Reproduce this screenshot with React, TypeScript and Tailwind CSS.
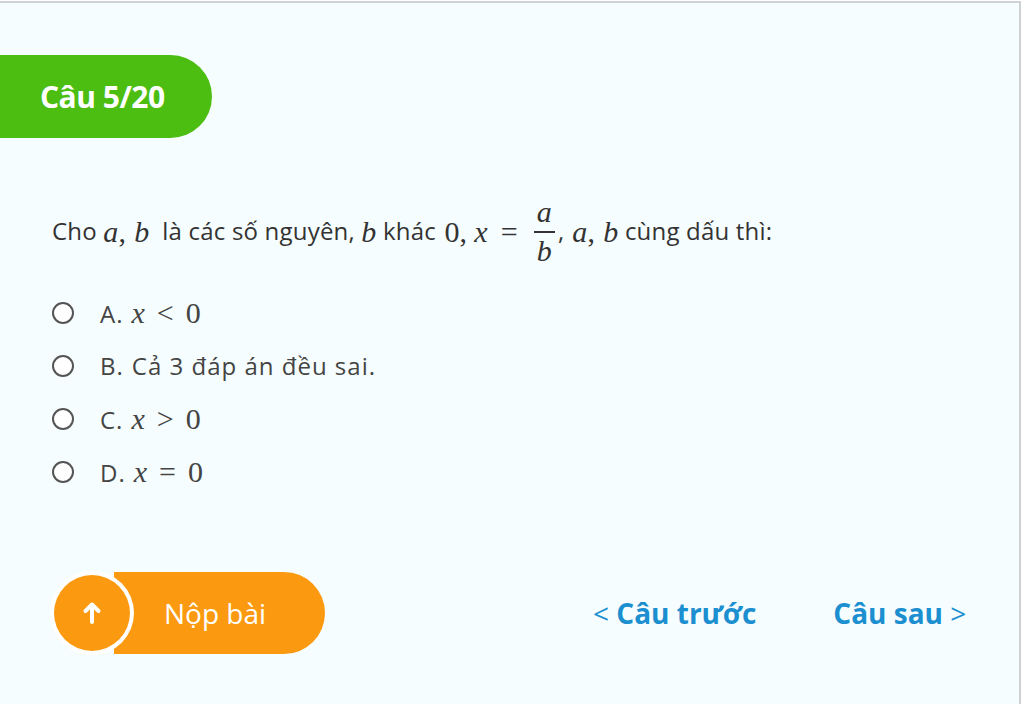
import React from "react";

const math = "font-['Liberation_Serif',serif] italic text-[30px]";
const num = "font-['Liberation_Serif',serif] not-italic text-[30px]";

function M({ children }: { children: React.ReactNode }) {
  return <span className={math}>{children}</span>;
}

function N({ children, className = "" }: { children: React.ReactNode; className?: string }) {
  return <span className={`${num} ${className}`}>{children}</span>;
}

function Rel({ x, op }: { x: string; op: string }) {
  return (
    <span className="inline-flex items-baseline">
      <M>{x}</M>
      <N className="mx-[11px]">{op}</N>
      <N>0</N>
    </span>
  );
}

function Option({ label, children }: { label: string; children: React.ReactNode }) {
  return (
    <div className="flex items-center h-[53px]">
      <span className="w-[22px] h-[22px] rounded-full border-2 border-[#555] bg-white shrink-0" />
      <span className="ml-[26px] text-[24px] tracking-[1px] text-[#444] flex items-baseline gap-[8px]">
        <span>{label}</span>
        {children}
      </span>
    </div>
  );
}

export default function App() {
  return (
    <div className="w-[1024px] h-[704px] bg-white pt-px font-['Open_Sans',sans-serif] overflow-hidden">
      <div className="w-[1021px] h-[703px] bg-[#f6fdfe] border-t-2 border-r-2 border-[#cfd2d4]">
        <div className="mt-[52px] w-[212px] h-[83px] bg-[#4cbe12] rounded-r-full flex items-center pl-[40px]">
          <span className="text-white font-bold text-[30px] tracking-[-0.5px]">Câu 5/20</span>
        </div>

        <div className="mt-[55px] ml-[52px] flex items-center h-[76px] text-[24px] tracking-[0.2px] text-[#333] whitespace-nowrap">
          <span>Cho&nbsp;</span>
          <M>a</M>
          <N className="mr-[8px]">,</N>
          <M>b</M>
          <span>&nbsp;&nbsp;là các số nguyên,&nbsp;</span>
          <M>b</M>
          <span>&nbsp;khác&nbsp;</span>
          <N className="ml-[2px]">0</N>
          <N className="mr-[7px]">,</N>
          <M>x</M>
          <N className="mx-[13px]">=</N>
          <span className="inline-flex flex-col items-center mx-[3px] leading-none">
            <span className={`${math} pb-[4px]`}>a</span>
            <span className="w-[21px] h-[2px] bg-[#333]" />
            <span className={`${math} pt-[3px]`}>b</span>
          </span>
          <span className="mr-[8px]">,</span>
          <M>a</M>
          <N className="mr-[8px]">,</N>
          <M>b</M>
          <span>&nbsp;cùng dấu thì:</span>
        </div>

        <div className="mt-[17px] ml-[52px] flex flex-col">
          <Option label="A.">
            <Rel x="x" op="<" />
          </Option>
          <Option label="B.">
            <span>Cả 3 đáp án đều sai.</span>
          </Option>
          <Option label="C.">
            <Rel x="x" op=">" />
          </Option>
          <Option label="D.">
            <Rel x="x" op="=" />
          </Option>
        </div>

        <div className="mt-[73px] flex items-center">
          <div className="ml-[50px] relative flex items-center">
            <div className="relative z-10 w-[84px] h-[84px] rounded-full bg-white p-[4px] -mr-[20px]">
              <div className="w-full h-full rounded-full bg-[#fb9a10] flex items-center justify-center">
                <svg width="24" height="24" viewBox="0 0 24 24" fill="none" stroke="white" strokeWidth="4" strokeLinecap="round" strokeLinejoin="round">
                  <path d="M12 21V4" />
                  <path d="M5.5 10L12 3.5 18.5 10" />
                </svg>
              </div>
            </div>
            <div className="h-[82px] w-[211px] bg-[#fb9a10] rounded-r-full flex items-center pl-[50px]">
              <span className="text-white text-[28px]">Nộp bài</span>
            </div>
          </div>
          <div className="ml-[268px] text-[#1b8fd0] text-[28px] whitespace-nowrap">
            <span className="font-normal">&lt; </span>
            <span className="font-bold">Câu trước</span>
          </div>
          <div className="ml-[77px] text-[#1b8fd0] text-[28px] whitespace-nowrap">
            <span className="font-bold">Câu sau</span>
            <span className="font-normal"> &gt;</span>
          </div>
        </div>
      </div>
    </div>
  );
}
